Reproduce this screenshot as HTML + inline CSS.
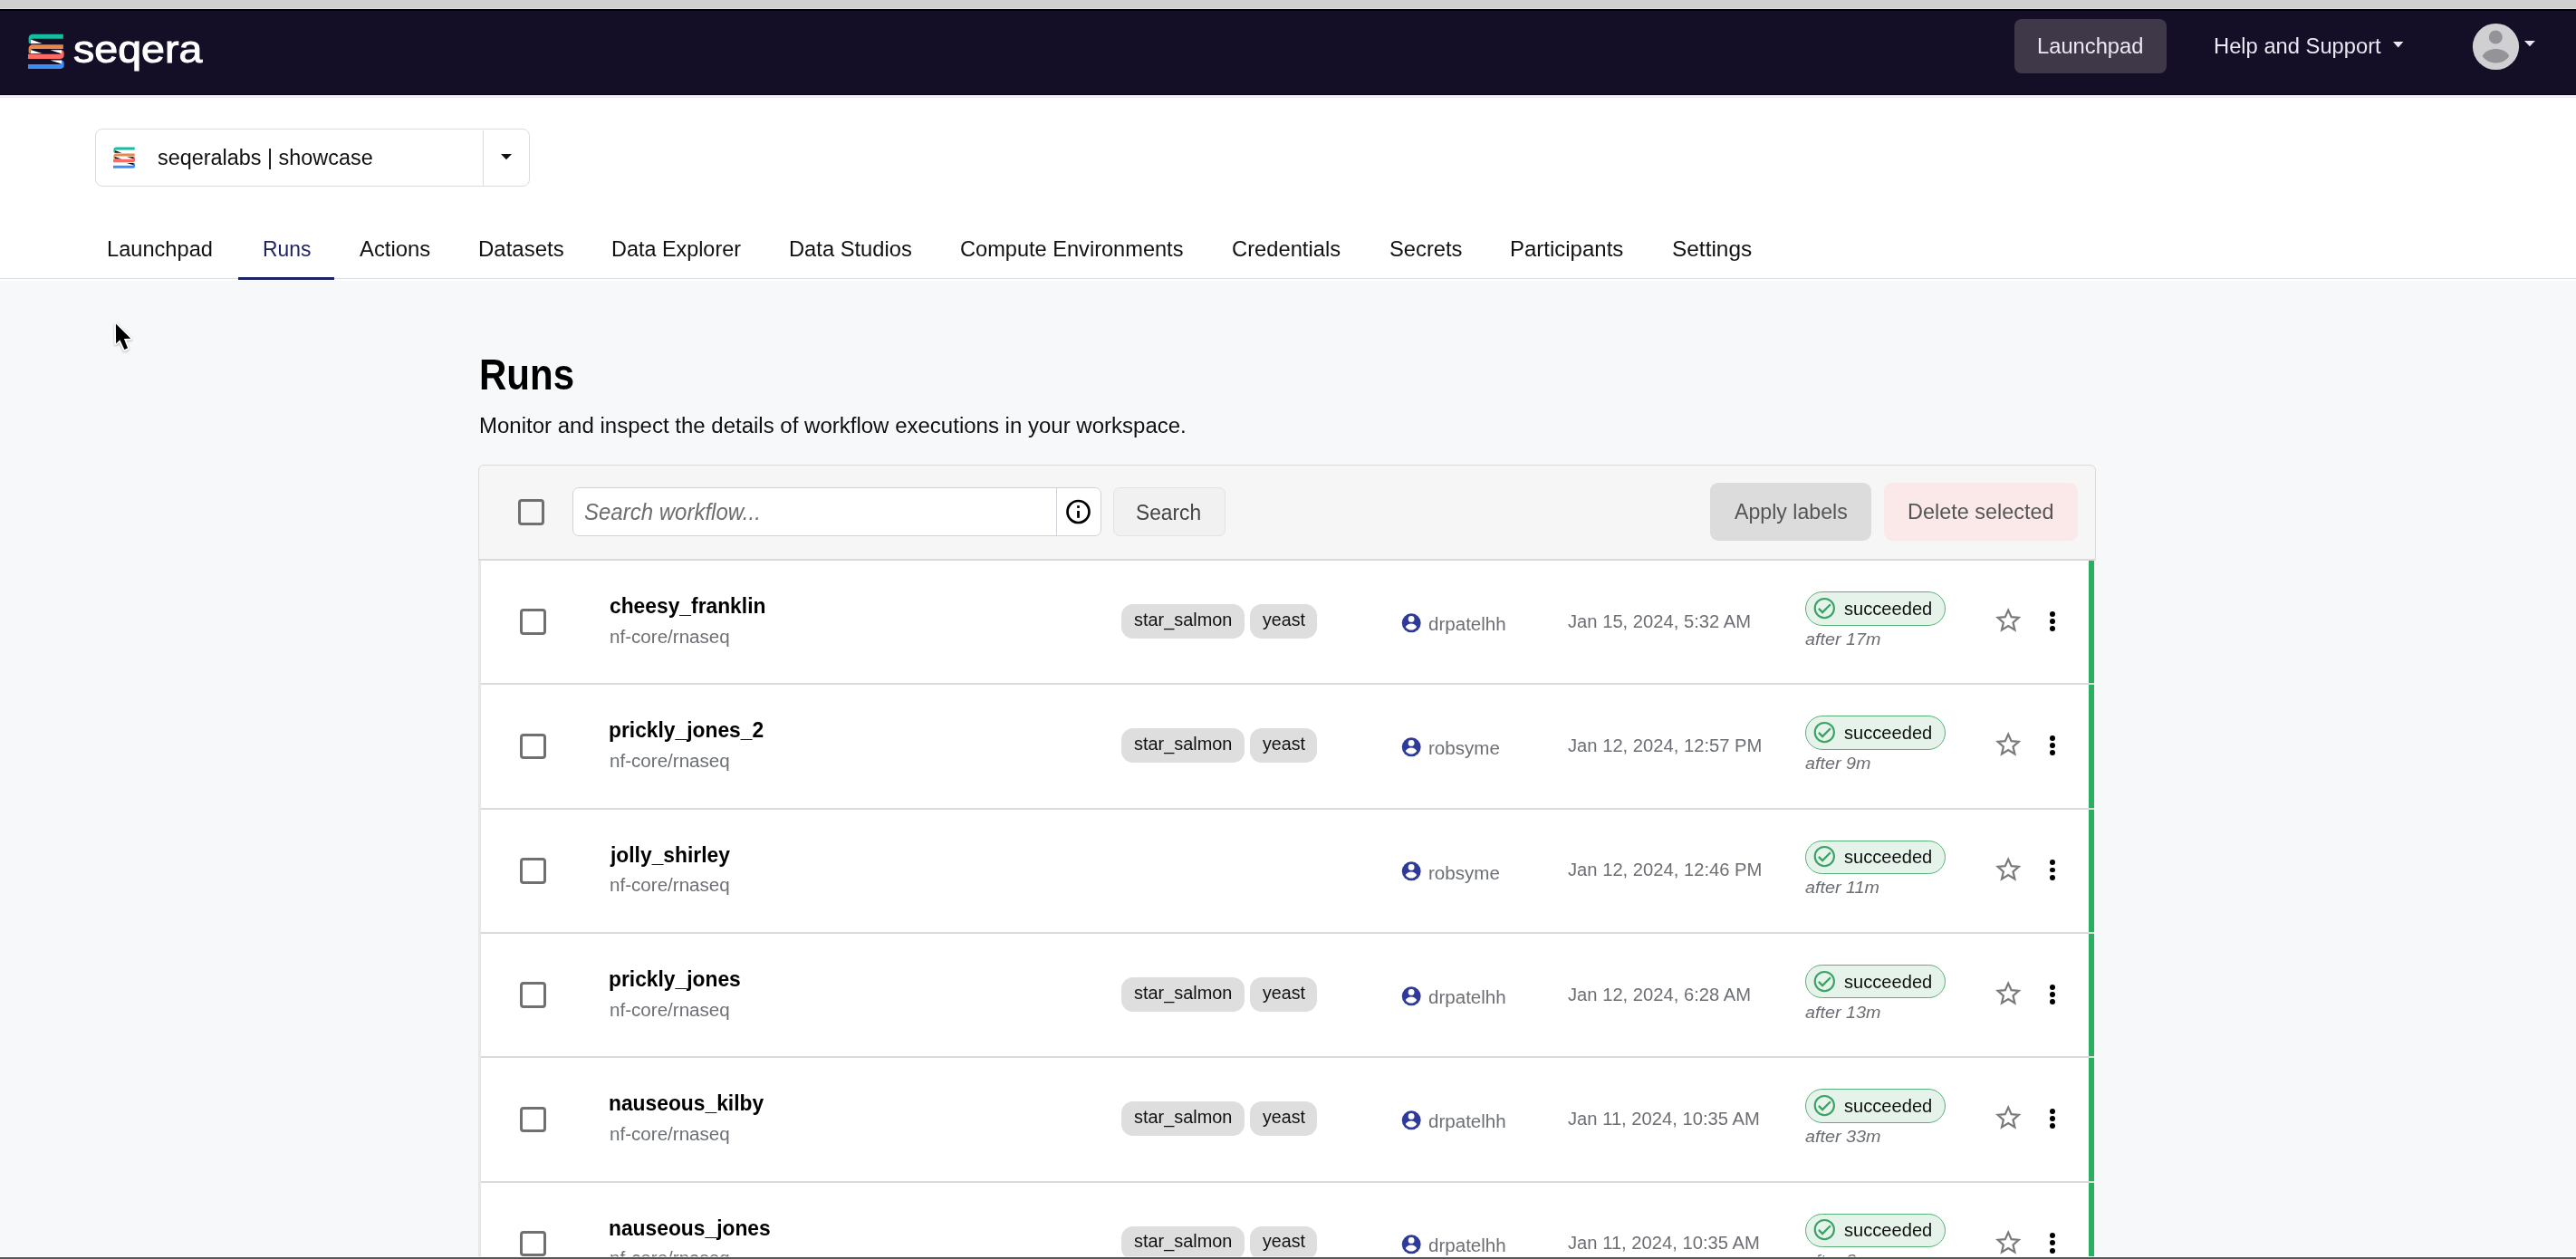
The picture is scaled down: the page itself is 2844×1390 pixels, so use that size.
<!DOCTYPE html>
<html><head><meta charset="utf-8"><title>Runs</title>
<style>
html{margin:0;padding:0;overflow:hidden;width:2844px;height:1390px;}
body{margin:0;padding:0;}
body{width:2844px;height:1390px;position:relative;overflow:hidden;background:#f7f8fa;font-family:"Liberation Sans",sans-serif;}
.a{position:absolute;}
.t{position:absolute;white-space:nowrap;line-height:1;transform-origin:0 0;font-family:"Liberation Sans",sans-serif;}
svg.a{overflow:visible;}
</style></head><body><div id="root" style="position:absolute;left:0;top:0;width:2844px;height:1390px;overflow:hidden;">
<div class="a" style="left:0px;top:0px;width:2844.00px;height:9.00px;background:#d0d0d0"></div>
<div class="a" style="left:0px;top:9px;width:2844.00px;height:1.00px;background:#dedede"></div>
<div class="a" style="left:0px;top:10px;width:2844.00px;height:2.00px;background:#000"></div>
<div class="a" style="left:0px;top:12px;width:2844.00px;height:92.00px;background:#140f26"></div>
<div class="a" style="left:0px;top:104px;width:2844.00px;height:1.00px;background:#07031a"></div>
<div class="a" style="left:0px;top:105px;width:2844.00px;height:1.50px;background:#efeef4"></div>
<div class="a" style="left:0px;top:106.5px;width:2844.00px;height:1.50px;background:#ebedec"></div>
<div class="a" style="left:0px;top:108px;width:2844.00px;height:199.00px;background:#ffffff"></div>
<div class="a" style="left:0px;top:307px;width:2844.00px;height:1.00px;background:#dedede"></div>
<div class="a" style="left:0px;top:308px;width:2844.00px;height:2.00px;background:#ffffff"></div>
<svg class="a" style="left:31px;top:37px" width="40.00" height="40.00" viewBox="0 0 40 40">
<path fill="#13bf9e" d="M38.8,0.8 L5.5,0.8 C2,0.8 0.6,3 0.6,6 L0.6,9 C0.6,10.5 1.5,11.2 2.6,11.2 L2.6,7.6 C2.6,6.6 3.5,5.8 5.5,5.8 L38.8,5.8 Z"/>
<path fill="#ffffff" d="M2.8,6.6 L15.5,10.9 L2.8,11.2 Z"/>
<path fill="#e8874b" d="M38.8,12.2 L5.5,12.2 C2,12.2 0.6,14.4 0.6,17.4 L0.6,20 C0.6,21.5 1.5,22.2 2.6,22.2 L2.6,19 C2.6,18 3.5,17.1 5.5,17.1 L38.8,17.1 Z"/>
<path fill="#ffffff" d="M2.8,17.9 L15.5,22 L2.8,22.3 Z"/>
<path fill="#f96b64" d="M0,22.7 L34.5,22.7 C36,22.7 36.9,21.9 36.9,20.6 L36.9,18.2 C38.6,18.2 39.6,19.6 39.6,21.6 L39.6,24 C39.6,26.5 38,28.1 35,28.1 L0,28.1 Z"/>
<path fill="#ffffff" d="M37,18.3 L24.5,18.3 L37,22.2 Z"/>
<path fill="#3c8ef4" d="M0,33.9 L34.5,33.9 C36,33.9 36.9,33.1 36.9,31.8 L36.9,29.4 C38.6,29.4 39.6,30.8 39.6,32.8 L39.6,35.2 C39.6,37.7 38,38.9 35,38.9 L0,38.9 Z"/>
<path fill="#ffffff" d="M37,29.5 L24.5,29.5 L37,33.4 Z"/>
</svg>
<div class="t" style="left:81.00px;top:34px;font-size:42px;font-weight:400;font-style:normal;color:#ffffff;transform:scaleX(1.1077);-webkit-text-stroke:1px #fff;">seqera</div>
<div class="a" style="left:2224px;top:21px;width:168.00px;height:59.50px;background:#3f3849;border-radius:8px"></div>
<div class="t" style="left:2249.13px;top:39px;font-size:24.6px;font-weight:400;font-style:normal;color:#ece8f3;transform:scaleX(0.9650);">Launchpad</div>
<div class="t" style="left:2443.64px;top:39px;font-size:24.6px;font-weight:400;font-style:normal;color:#ece8f3;transform:scaleX(0.9649);">Help and Support</div>
<svg class="a" style="left:2641.9px;top:46.3px" width="11.40" height="6.50" viewBox="0 0 12 7" preserveAspectRatio="none"><path fill="#ece8f3" d="M0,0 L12,0 L6,7 Z"/></svg>
<svg class="a" style="left:2729px;top:25px" width="53" height="53" viewBox="0 0 53 53">
<circle cx="26.5" cy="26.5" r="25.6" fill="#d0d0d2"/>
<circle cx="26.3" cy="16" r="7.5" fill="#949398"/>
<path fill="#949398" d="M11.6,36.8 C15,31 21,29.1 26.5,29.1 C32,29.1 38,31 41.3,36.8 C38,42.2 32,44.6 26.5,44.6 C21,44.6 15,42.2 11.6,36.8 Z"/>
</svg>
<svg class="a" style="left:2787.1px;top:44.8px" width="11.90" height="6.20" viewBox="0 0 12 7" preserveAspectRatio="none"><path fill="#ece8f3" d="M0,0 L12,0 L6,7 Z"/></svg>
<div class="a" style="left:105px;top:142px;width:479.50px;height:63.50px;box-sizing:border-box;border:1.5px solid #dcdcdc;border-radius:8px;background:#fff"></div>
<div class="a" style="left:532.8px;top:143.5px;width:1.40px;height:61.00px;background:#dcdcdc"></div>
<svg class="a" style="left:124.6px;top:161.8px" width="24.40" height="24.40" viewBox="0 0 40 40">
<path fill="#13bf9e" d="M38.8,0.8 L5.5,0.8 C2,0.8 0.6,3 0.6,6 L0.6,9 C0.6,10.5 1.5,11.2 2.6,11.2 L2.6,7.6 C2.6,6.6 3.5,5.8 5.5,5.8 L38.8,5.8 Z"/>
<path fill="#111111" d="M2.8,6.6 L15.5,10.9 L2.8,11.2 Z"/>
<path fill="#e8874b" d="M38.8,12.2 L5.5,12.2 C2,12.2 0.6,14.4 0.6,17.4 L0.6,20 C0.6,21.5 1.5,22.2 2.6,22.2 L2.6,19 C2.6,18 3.5,17.1 5.5,17.1 L38.8,17.1 Z"/>
<path fill="#111111" d="M2.8,17.9 L15.5,22 L2.8,22.3 Z"/>
<path fill="#f96b64" d="M0,22.7 L34.5,22.7 C36,22.7 36.9,21.9 36.9,20.6 L36.9,18.2 C38.6,18.2 39.6,19.6 39.6,21.6 L39.6,24 C39.6,26.5 38,28.1 35,28.1 L0,28.1 Z"/>
<path fill="#111111" d="M37,18.3 L24.5,18.3 L37,22.2 Z"/>
<path fill="#3c8ef4" d="M0,33.9 L34.5,33.9 C36,33.9 36.9,33.1 36.9,31.8 L36.9,29.4 C38.6,29.4 39.6,30.8 39.6,32.8 L39.6,35.2 C39.6,37.7 38,38.9 35,38.9 L0,38.9 Z"/>
<path fill="#111111" d="M37,29.5 L24.5,29.5 L37,33.4 Z"/>
</svg>
<div class="t" style="left:173.50px;top:163px;font-size:23.3px;font-weight:400;font-style:normal;color:#111111;transform:scaleX(1.0047);">seqeralabs | showcase</div>
<svg class="a" style="left:553.2px;top:169.8px" width="12.00" height="6.20" viewBox="0 0 12 7" preserveAspectRatio="none"><path fill="#111111" d="M0,0 L12,0 L6,7 Z"/></svg>
<div class="t" style="left:118.24px;top:263px;font-size:24.5px;font-weight:400;font-style:normal;color:#111111;transform:scaleX(0.9642);">Launchpad</div>
<div class="t" style="left:289.57px;top:263px;font-size:24.5px;font-weight:400;font-style:normal;color:#1e2461;transform:scaleX(0.9339);">Runs</div>
<div class="t" style="left:397.00px;top:263px;font-size:24.5px;font-weight:400;font-style:normal;color:#111111;transform:scaleX(0.9737);">Actions</div>
<div class="t" style="left:528.02px;top:263px;font-size:24.5px;font-weight:400;font-style:normal;color:#111111;transform:scaleX(0.9789);">Datasets</div>
<div class="t" style="left:674.85px;top:263px;font-size:24.5px;font-weight:400;font-style:normal;color:#111111;transform:scaleX(0.9544);">Data Explorer</div>
<div class="t" style="left:871.23px;top:263px;font-size:24.5px;font-weight:400;font-style:normal;color:#111111;transform:scaleX(0.9676);">Data Studios</div>
<div class="t" style="left:1060.44px;top:263px;font-size:24.5px;font-weight:400;font-style:normal;color:#111111;transform:scaleX(0.9627);">Compute Environments</div>
<div class="t" style="left:1360.03px;top:263px;font-size:24.5px;font-weight:400;font-style:normal;color:#111111;transform:scaleX(0.9691);">Credentials</div>
<div class="t" style="left:1533.53px;top:263px;font-size:24.5px;font-weight:400;font-style:normal;color:#111111;transform:scaleX(0.9683);">Secrets</div>
<div class="t" style="left:1667.12px;top:263px;font-size:24.5px;font-weight:400;font-style:normal;color:#111111;transform:scaleX(0.9787);">Participants</div>
<div class="t" style="left:1845.60px;top:263px;font-size:24.5px;font-weight:400;font-style:normal;color:#111111;transform:scaleX(0.9966);">Settings</div>
<div class="a" style="left:263.2px;top:305.8px;width:106.30px;height:3.20px;background:#1d2265"></div>
<svg class="a" style="left:120px;top:350px;filter:drop-shadow(0.8px 1.6px 1.2px rgba(0,0,0,0.28))" width="40" height="45" viewBox="0 0 40 45">
<path fill="#000" stroke="#fff" stroke-width="3.6" paint-order="stroke" stroke-linejoin="round" d="M7.9,7.6 L8.1,29.2 L12.4,25.2 L17.4,36 L21,34.3 L16.9,23.9 L24.3,23.7 Z"/>
</svg>
<div class="t" style="left:529.13px;top:390px;font-size:47.5px;font-weight:700;font-style:normal;color:#000000;transform:scaleX(0.8852);">Runs</div>
<div class="t" style="left:528.78px;top:459px;font-size:23.5px;font-weight:400;font-style:normal;color:#111111;transform:scaleX(1.0218);">Monitor and inspect the details of workflow executions in your workspace.</div>
<div class="a" style="left:528px;top:513px;width:1785.50px;height:882.00px;box-sizing:border-box;border:1px solid #dcdcdc;border-radius:6px;background:#f6f6f6"></div>
<div class="a" style="left:528px;top:617px;width:1785.50px;height:2.00px;background:#dadada"></div>
<div class="a" style="left:528px;top:619px;width:3.00px;height:771.00px;background:#e6e8e8"></div>
<div class="a" style="left:531px;top:619px;width:1775.20px;height:768.00px;background:#ffffff"></div>
<div class="a" style="left:2306.2px;top:619px;width:6.00px;height:768.00px;background:#2aae62"></div>
<div class="a" style="left:2312.2px;top:619px;width:7.80px;height:768.00px;background:#f7f8fa"></div>
<div class="a" style="left:572px;top:551px;width:29.00px;height:29.00px;box-sizing:border-box;border:3px solid #6f6f6f;border-radius:4px"></div>
<div class="a" style="left:632.2px;top:538px;width:583.40px;height:54.40px;box-sizing:border-box;border:1.5px solid #cfd3d8;border-radius:7px;background:#fff"></div>
<div class="a" style="left:1165.7px;top:539.2px;width:1.30px;height:52.00px;background:#cfd3d8"></div>
<svg class="a" style="left:1176px;top:551px" width="29" height="29" viewBox="0 0 29 29">
<circle cx="14.5" cy="14" r="12" fill="none" stroke="#000" stroke-width="2.7"/>
<rect x="13.1" y="7.2" width="2.8" height="2.7" fill="#000"/>
<rect x="13.1" y="13" width="2.8" height="7.8" fill="#000"/>
</svg>
<div class="t" style="left:644.84px;top:553px;font-size:24.9px;font-weight:400;font-style:italic;color:#6e6e6e;transform:scaleX(0.9646);">Search workflow...</div>
<div class="a" style="left:1228.5px;top:538px;width:124.10px;height:54.40px;box-sizing:border-box;border:1px solid #e3e3e3;border-radius:7px;background:#f1f1f1"></div>
<div class="t" style="left:1254.37px;top:554px;font-size:24.4px;font-weight:400;font-style:normal;color:#444444;transform:scaleX(0.9329);">Search</div>
<div class="a" style="left:1888px;top:533px;width:177.90px;height:63.70px;background:#dcdcdc;border-radius:9px"></div>
<div class="t" style="left:1914.70px;top:553px;font-size:24.3px;font-weight:400;font-style:normal;color:#555555;transform:scaleX(0.9519);">Apply labels</div>
<div class="a" style="left:2079.5px;top:533px;width:214.60px;height:63.70px;background:#fbe9ea;border-radius:9px"></div>
<div class="t" style="left:2105.54px;top:553px;font-size:24.3px;font-weight:400;font-style:normal;color:#555555;transform:scaleX(0.9639);">Delete selected</div>
<div class="a" style="left:574.4px;top:672.4px;width:28.50px;height:28.50px;box-sizing:border-box;border:3px solid #707070;border-radius:4px"></div>
<div class="t" style="left:672.80px;top:657px;font-size:24px;font-weight:700;font-style:normal;color:#000000;transform:scaleX(0.9503);">cheesy_franklin</div>
<div class="t" style="left:672.80px;top:694px;font-size:19.6px;font-weight:400;font-style:normal;color:#6c7075;transform:scaleX(1.0508);">nf-core/rnaseq</div>
<div class="a" style="left:1238.2px;top:667.0px;width:135.80px;height:37.70px;background:#dedede;border-radius:13px"></div>
<div class="a" style="left:1380px;top:667.0px;width:73.80px;height:37.70px;background:#dedede;border-radius:13px"></div>
<div class="t" style="left:1251.60px;top:675px;font-size:19.7px;font-weight:400;font-style:normal;color:#111111;transform:scaleX(1.0103);">star_salmon</div>
<div class="t" style="left:1393.50px;top:675px;font-size:19.7px;font-weight:400;font-style:normal;color:#111111;transform:scaleX(0.9979);">yeast</div>
<svg class="a" style="left:1547px;top:676.60px" width="22" height="22" viewBox="0 0 22 22">
<circle cx="11.2" cy="10.8" r="10.45" fill="#2e3a9a"/>
<circle cx="11.1" cy="6.4" r="3.4" fill="#fff"/>
<path fill="#fff" d="M4.7,15 C6.5,12.4 8.8,11.4 11,11.4 C13.2,11.4 15.5,12.4 17.2,15 C15.5,17.6 13.2,18.6 11,18.6 C8.8,18.6 6.5,17.6 4.7,15 Z"/>
</svg>
<div class="t" style="left:1577.00px;top:680px;font-size:19.6px;font-weight:400;font-style:normal;color:#6c6f74;transform:scaleX(1.0494);">drpatelhh</div>
<div class="t" style="left:1730.50px;top:676px;font-size:20px;font-weight:400;font-style:normal;color:#6c6f74;transform:scaleX(1.0095);">Jan 15, 2024, 5:32 AM</div>
<div class="a" style="left:1992.9px;top:653.0px;width:154.80px;height:37.60px;box-sizing:border-box;border:1.2px solid #58b277;border-radius:19px;background:#e5f3ea"></div>
<svg class="a" style="left:2002px;top:658.60px" width="25" height="25" viewBox="0 0 25 25">
<circle cx="12.3" cy="12.6" r="10.6" fill="none" stroke="#3aa264" stroke-width="2.1"/>
<path d="M5.9,12.9 L10.1,17.1 L18.9,8.3" fill="none" stroke="#3aa264" stroke-width="2.3"/>
</svg>
<div class="t" style="left:2036.20px;top:663px;font-size:19.3px;font-weight:400;font-style:normal;color:#111111;transform:scaleX(1.0430);">succeeded</div>
<div class="t" style="left:1992.90px;top:696px;font-size:19.2px;font-weight:400;font-style:italic;color:#6b6e73;transform:scaleX(1.0309);">after 17m</div>
<svg class="a" style="left:2201.5px;top:670.00px" width="31" height="30" viewBox="0 0 31 30">
<path fill="none" stroke="#7a7a7a" stroke-width="2.2" stroke-linejoin="miter" d="M15.2,3.6 L18.6,11.2 L26.7,11.9 L20.5,17.3 L22.4,25.4 L15.2,21.1 L8,25.4 L9.9,17.3 L3.7,11.9 L11.8,11.2 Z"/>
</svg>
<div class="a" style="left:2263.1px;top:674.85px;width:5.9px;height:5.9px;border-radius:50%;background:#000"></div>
<div class="a" style="left:2263.1px;top:682.95px;width:5.9px;height:5.9px;border-radius:50%;background:#000"></div>
<div class="a" style="left:2263.1px;top:691.15px;width:5.9px;height:5.9px;border-radius:50%;background:#000"></div>
<div class="a" style="left:531px;top:754.3px;width:1781.20px;height:2.00px;background:#dadada"></div>
<div class="a" style="left:574.4px;top:809.7px;width:28.50px;height:28.50px;box-sizing:border-box;border:3px solid #707070;border-radius:4px"></div>
<div class="t" style="left:671.85px;top:794px;font-size:24px;font-weight:700;font-style:normal;color:#000000;transform:scaleX(0.9503);">prickly_jones_2</div>
<div class="t" style="left:672.80px;top:831px;font-size:19.6px;font-weight:400;font-style:normal;color:#6c7075;transform:scaleX(1.0508);">nf-core/rnaseq</div>
<div class="a" style="left:1238.2px;top:804.3px;width:135.80px;height:37.70px;background:#dedede;border-radius:13px"></div>
<div class="a" style="left:1380px;top:804.3px;width:73.80px;height:37.70px;background:#dedede;border-radius:13px"></div>
<div class="t" style="left:1251.60px;top:812px;font-size:19.7px;font-weight:400;font-style:normal;color:#111111;transform:scaleX(1.0103);">star_salmon</div>
<div class="t" style="left:1393.50px;top:812px;font-size:19.7px;font-weight:400;font-style:normal;color:#111111;transform:scaleX(0.9979);">yeast</div>
<svg class="a" style="left:1547px;top:813.90px" width="22" height="22" viewBox="0 0 22 22">
<circle cx="11.2" cy="10.8" r="10.45" fill="#2e3a9a"/>
<circle cx="11.1" cy="6.4" r="3.4" fill="#fff"/>
<path fill="#fff" d="M4.7,15 C6.5,12.4 8.8,11.4 11,11.4 C13.2,11.4 15.5,12.4 17.2,15 C15.5,17.6 13.2,18.6 11,18.6 C8.8,18.6 6.5,17.6 4.7,15 Z"/>
</svg>
<div class="t" style="left:1577.00px;top:817px;font-size:19.6px;font-weight:400;font-style:normal;color:#6c6f74;transform:scaleX(1.0494);">robsyme</div>
<div class="t" style="left:1730.50px;top:813px;font-size:20px;font-weight:400;font-style:normal;color:#6c6f74;transform:scaleX(1.0095);">Jan 12, 2024, 12:57 PM</div>
<div class="a" style="left:1992.9px;top:790.3px;width:154.80px;height:37.60px;box-sizing:border-box;border:1.2px solid #58b277;border-radius:19px;background:#e5f3ea"></div>
<svg class="a" style="left:2002px;top:795.90px" width="25" height="25" viewBox="0 0 25 25">
<circle cx="12.3" cy="12.6" r="10.6" fill="none" stroke="#3aa264" stroke-width="2.1"/>
<path d="M5.9,12.9 L10.1,17.1 L18.9,8.3" fill="none" stroke="#3aa264" stroke-width="2.3"/>
</svg>
<div class="t" style="left:2036.20px;top:800px;font-size:19.3px;font-weight:400;font-style:normal;color:#111111;transform:scaleX(1.0430);">succeeded</div>
<div class="t" style="left:1992.90px;top:833px;font-size:19.2px;font-weight:400;font-style:italic;color:#6b6e73;transform:scaleX(1.0309);">after 9m</div>
<svg class="a" style="left:2201.5px;top:807.30px" width="31" height="30" viewBox="0 0 31 30">
<path fill="none" stroke="#7a7a7a" stroke-width="2.2" stroke-linejoin="miter" d="M15.2,3.6 L18.6,11.2 L26.7,11.9 L20.5,17.3 L22.4,25.4 L15.2,21.1 L8,25.4 L9.9,17.3 L3.7,11.9 L11.8,11.2 Z"/>
</svg>
<div class="a" style="left:2263.1px;top:812.15px;width:5.9px;height:5.9px;border-radius:50%;background:#000"></div>
<div class="a" style="left:2263.1px;top:820.25px;width:5.9px;height:5.9px;border-radius:50%;background:#000"></div>
<div class="a" style="left:2263.1px;top:828.45px;width:5.9px;height:5.9px;border-radius:50%;background:#000"></div>
<div class="a" style="left:531px;top:891.6px;width:1781.20px;height:2.00px;background:#dadada"></div>
<div class="a" style="left:574.4px;top:947.0px;width:28.50px;height:28.50px;box-sizing:border-box;border:3px solid #707070;border-radius:4px"></div>
<div class="t" style="left:673.75px;top:932px;font-size:24px;font-weight:700;font-style:normal;color:#000000;transform:scaleX(0.9503);">jolly_shirley</div>
<div class="t" style="left:672.80px;top:968px;font-size:19.6px;font-weight:400;font-style:normal;color:#6c7075;transform:scaleX(1.0508);">nf-core/rnaseq</div>
<svg class="a" style="left:1547px;top:951.20px" width="22" height="22" viewBox="0 0 22 22">
<circle cx="11.2" cy="10.8" r="10.45" fill="#2e3a9a"/>
<circle cx="11.1" cy="6.4" r="3.4" fill="#fff"/>
<path fill="#fff" d="M4.7,15 C6.5,12.4 8.8,11.4 11,11.4 C13.2,11.4 15.5,12.4 17.2,15 C15.5,17.6 13.2,18.6 11,18.6 C8.8,18.6 6.5,17.6 4.7,15 Z"/>
</svg>
<div class="t" style="left:1577.00px;top:955px;font-size:19.6px;font-weight:400;font-style:normal;color:#6c6f74;transform:scaleX(1.0494);">robsyme</div>
<div class="t" style="left:1730.50px;top:950px;font-size:20px;font-weight:400;font-style:normal;color:#6c6f74;transform:scaleX(1.0095);">Jan 12, 2024, 12:46 PM</div>
<div class="a" style="left:1992.9px;top:927.6px;width:154.80px;height:37.60px;box-sizing:border-box;border:1.2px solid #58b277;border-radius:19px;background:#e5f3ea"></div>
<svg class="a" style="left:2002px;top:933.20px" width="25" height="25" viewBox="0 0 25 25">
<circle cx="12.3" cy="12.6" r="10.6" fill="none" stroke="#3aa264" stroke-width="2.1"/>
<path d="M5.9,12.9 L10.1,17.1 L18.9,8.3" fill="none" stroke="#3aa264" stroke-width="2.3"/>
</svg>
<div class="t" style="left:2036.20px;top:937px;font-size:19.3px;font-weight:400;font-style:normal;color:#111111;transform:scaleX(1.0430);">succeeded</div>
<div class="t" style="left:1992.90px;top:970px;font-size:19.2px;font-weight:400;font-style:italic;color:#6b6e73;transform:scaleX(1.0309);">after 11m</div>
<svg class="a" style="left:2201.5px;top:944.60px" width="31" height="30" viewBox="0 0 31 30">
<path fill="none" stroke="#7a7a7a" stroke-width="2.2" stroke-linejoin="miter" d="M15.2,3.6 L18.6,11.2 L26.7,11.9 L20.5,17.3 L22.4,25.4 L15.2,21.1 L8,25.4 L9.9,17.3 L3.7,11.9 L11.8,11.2 Z"/>
</svg>
<div class="a" style="left:2263.1px;top:949.45px;width:5.9px;height:5.9px;border-radius:50%;background:#000"></div>
<div class="a" style="left:2263.1px;top:957.55px;width:5.9px;height:5.9px;border-radius:50%;background:#000"></div>
<div class="a" style="left:2263.1px;top:965.75px;width:5.9px;height:5.9px;border-radius:50%;background:#000"></div>
<div class="a" style="left:531px;top:1028.9px;width:1781.20px;height:2.00px;background:#dadada"></div>
<div class="a" style="left:574.4px;top:1084.3px;width:28.50px;height:28.50px;box-sizing:border-box;border:3px solid #707070;border-radius:4px"></div>
<div class="t" style="left:671.85px;top:1069px;font-size:24px;font-weight:700;font-style:normal;color:#000000;transform:scaleX(0.9503);">prickly_jones</div>
<div class="t" style="left:672.80px;top:1106px;font-size:19.6px;font-weight:400;font-style:normal;color:#6c7075;transform:scaleX(1.0508);">nf-core/rnaseq</div>
<div class="a" style="left:1238.2px;top:1078.9px;width:135.80px;height:37.70px;background:#dedede;border-radius:13px"></div>
<div class="a" style="left:1380px;top:1078.9px;width:73.80px;height:37.70px;background:#dedede;border-radius:13px"></div>
<div class="t" style="left:1251.60px;top:1087px;font-size:19.7px;font-weight:400;font-style:normal;color:#111111;transform:scaleX(1.0103);">star_salmon</div>
<div class="t" style="left:1393.50px;top:1087px;font-size:19.7px;font-weight:400;font-style:normal;color:#111111;transform:scaleX(0.9979);">yeast</div>
<svg class="a" style="left:1547px;top:1088.50px" width="22" height="22" viewBox="0 0 22 22">
<circle cx="11.2" cy="10.8" r="10.45" fill="#2e3a9a"/>
<circle cx="11.1" cy="6.4" r="3.4" fill="#fff"/>
<path fill="#fff" d="M4.7,15 C6.5,12.4 8.8,11.4 11,11.4 C13.2,11.4 15.5,12.4 17.2,15 C15.5,17.6 13.2,18.6 11,18.6 C8.8,18.6 6.5,17.6 4.7,15 Z"/>
</svg>
<div class="t" style="left:1577.00px;top:1092px;font-size:19.6px;font-weight:400;font-style:normal;color:#6c6f74;transform:scaleX(1.0494);">drpatelhh</div>
<div class="t" style="left:1730.50px;top:1088px;font-size:20px;font-weight:400;font-style:normal;color:#6c6f74;transform:scaleX(1.0095);">Jan 12, 2024, 6:28 AM</div>
<div class="a" style="left:1992.9px;top:1064.9px;width:154.80px;height:37.60px;box-sizing:border-box;border:1.2px solid #58b277;border-radius:19px;background:#e5f3ea"></div>
<svg class="a" style="left:2002px;top:1070.50px" width="25" height="25" viewBox="0 0 25 25">
<circle cx="12.3" cy="12.6" r="10.6" fill="none" stroke="#3aa264" stroke-width="2.1"/>
<path d="M5.9,12.9 L10.1,17.1 L18.9,8.3" fill="none" stroke="#3aa264" stroke-width="2.3"/>
</svg>
<div class="t" style="left:2036.20px;top:1075px;font-size:19.3px;font-weight:400;font-style:normal;color:#111111;transform:scaleX(1.0430);">succeeded</div>
<div class="t" style="left:1992.90px;top:1108px;font-size:19.2px;font-weight:400;font-style:italic;color:#6b6e73;transform:scaleX(1.0309);">after 13m</div>
<svg class="a" style="left:2201.5px;top:1081.90px" width="31" height="30" viewBox="0 0 31 30">
<path fill="none" stroke="#7a7a7a" stroke-width="2.2" stroke-linejoin="miter" d="M15.2,3.6 L18.6,11.2 L26.7,11.9 L20.5,17.3 L22.4,25.4 L15.2,21.1 L8,25.4 L9.9,17.3 L3.7,11.9 L11.8,11.2 Z"/>
</svg>
<div class="a" style="left:2263.1px;top:1086.75px;width:5.9px;height:5.9px;border-radius:50%;background:#000"></div>
<div class="a" style="left:2263.1px;top:1094.85px;width:5.9px;height:5.9px;border-radius:50%;background:#000"></div>
<div class="a" style="left:2263.1px;top:1103.05px;width:5.9px;height:5.9px;border-radius:50%;background:#000"></div>
<div class="a" style="left:531px;top:1166.2px;width:1781.20px;height:2.00px;background:#dadada"></div>
<div class="a" style="left:574.4px;top:1221.6px;width:28.50px;height:28.50px;box-sizing:border-box;border:3px solid #707070;border-radius:4px"></div>
<div class="t" style="left:671.85px;top:1206px;font-size:24px;font-weight:700;font-style:normal;color:#000000;transform:scaleX(0.9503);">nauseous_kilby</div>
<div class="t" style="left:672.80px;top:1243px;font-size:19.6px;font-weight:400;font-style:normal;color:#6c7075;transform:scaleX(1.0508);">nf-core/rnaseq</div>
<div class="a" style="left:1238.2px;top:1216.2px;width:135.80px;height:37.70px;background:#dedede;border-radius:13px"></div>
<div class="a" style="left:1380px;top:1216.2px;width:73.80px;height:37.70px;background:#dedede;border-radius:13px"></div>
<div class="t" style="left:1251.60px;top:1224px;font-size:19.7px;font-weight:400;font-style:normal;color:#111111;transform:scaleX(1.0103);">star_salmon</div>
<div class="t" style="left:1393.50px;top:1224px;font-size:19.7px;font-weight:400;font-style:normal;color:#111111;transform:scaleX(0.9979);">yeast</div>
<svg class="a" style="left:1547px;top:1225.80px" width="22" height="22" viewBox="0 0 22 22">
<circle cx="11.2" cy="10.8" r="10.45" fill="#2e3a9a"/>
<circle cx="11.1" cy="6.4" r="3.4" fill="#fff"/>
<path fill="#fff" d="M4.7,15 C6.5,12.4 8.8,11.4 11,11.4 C13.2,11.4 15.5,12.4 17.2,15 C15.5,17.6 13.2,18.6 11,18.6 C8.8,18.6 6.5,17.6 4.7,15 Z"/>
</svg>
<div class="t" style="left:1577.00px;top:1229px;font-size:19.6px;font-weight:400;font-style:normal;color:#6c6f74;transform:scaleX(1.0494);">drpatelhh</div>
<div class="t" style="left:1730.50px;top:1225px;font-size:20px;font-weight:400;font-style:normal;color:#6c6f74;transform:scaleX(1.0095);">Jan 11, 2024, 10:35 AM</div>
<div class="a" style="left:1992.9px;top:1202.2px;width:154.80px;height:37.60px;box-sizing:border-box;border:1.2px solid #58b277;border-radius:19px;background:#e5f3ea"></div>
<svg class="a" style="left:2002px;top:1207.80px" width="25" height="25" viewBox="0 0 25 25">
<circle cx="12.3" cy="12.6" r="10.6" fill="none" stroke="#3aa264" stroke-width="2.1"/>
<path d="M5.9,12.9 L10.1,17.1 L18.9,8.3" fill="none" stroke="#3aa264" stroke-width="2.3"/>
</svg>
<div class="t" style="left:2036.20px;top:1212px;font-size:19.3px;font-weight:400;font-style:normal;color:#111111;transform:scaleX(1.0430);">succeeded</div>
<div class="t" style="left:1992.90px;top:1245px;font-size:19.2px;font-weight:400;font-style:italic;color:#6b6e73;transform:scaleX(1.0309);">after 33m</div>
<svg class="a" style="left:2201.5px;top:1219.20px" width="31" height="30" viewBox="0 0 31 30">
<path fill="none" stroke="#7a7a7a" stroke-width="2.2" stroke-linejoin="miter" d="M15.2,3.6 L18.6,11.2 L26.7,11.9 L20.5,17.3 L22.4,25.4 L15.2,21.1 L8,25.4 L9.9,17.3 L3.7,11.9 L11.8,11.2 Z"/>
</svg>
<div class="a" style="left:2263.1px;top:1224.05px;width:5.9px;height:5.9px;border-radius:50%;background:#000"></div>
<div class="a" style="left:2263.1px;top:1232.15px;width:5.9px;height:5.9px;border-radius:50%;background:#000"></div>
<div class="a" style="left:2263.1px;top:1240.35px;width:5.9px;height:5.9px;border-radius:50%;background:#000"></div>
<div class="a" style="left:531px;top:1303.5px;width:1781.20px;height:2.00px;background:#dadada"></div>
<div class="a" style="left:574.4px;top:1358.9px;width:28.50px;height:28.50px;box-sizing:border-box;border:3px solid #707070;border-radius:4px"></div>
<div class="t" style="left:671.85px;top:1344px;font-size:24px;font-weight:700;font-style:normal;color:#000000;transform:scaleX(0.9503);">nauseous_jones</div>
<div class="t" style="left:672.80px;top:1380px;font-size:19.6px;font-weight:400;font-style:normal;color:#6c7075;transform:scaleX(1.0508);">nf-core/rnaseq</div>
<div class="a" style="left:1238.2px;top:1353.5px;width:135.80px;height:37.70px;background:#dedede;border-radius:13px"></div>
<div class="a" style="left:1380px;top:1353.5px;width:73.80px;height:37.70px;background:#dedede;border-radius:13px"></div>
<div class="t" style="left:1251.60px;top:1361px;font-size:19.7px;font-weight:400;font-style:normal;color:#111111;transform:scaleX(1.0103);">star_salmon</div>
<div class="t" style="left:1393.50px;top:1361px;font-size:19.7px;font-weight:400;font-style:normal;color:#111111;transform:scaleX(0.9979);">yeast</div>
<svg class="a" style="left:1547px;top:1363.10px" width="22" height="22" viewBox="0 0 22 22">
<circle cx="11.2" cy="10.8" r="10.45" fill="#2e3a9a"/>
<circle cx="11.1" cy="6.4" r="3.4" fill="#fff"/>
<path fill="#fff" d="M4.7,15 C6.5,12.4 8.8,11.4 11,11.4 C13.2,11.4 15.5,12.4 17.2,15 C15.5,17.6 13.2,18.6 11,18.6 C8.8,18.6 6.5,17.6 4.7,15 Z"/>
</svg>
<div class="t" style="left:1577.00px;top:1366px;font-size:19.6px;font-weight:400;font-style:normal;color:#6c6f74;transform:scaleX(1.0494);">drpatelhh</div>
<div class="t" style="left:1730.50px;top:1362px;font-size:20px;font-weight:400;font-style:normal;color:#6c6f74;transform:scaleX(1.0095);">Jan 11, 2024, 10:35 AM</div>
<div class="a" style="left:1992.9px;top:1339.5px;width:154.80px;height:37.60px;box-sizing:border-box;border:1.2px solid #58b277;border-radius:19px;background:#e5f3ea"></div>
<svg class="a" style="left:2002px;top:1345.10px" width="25" height="25" viewBox="0 0 25 25">
<circle cx="12.3" cy="12.6" r="10.6" fill="none" stroke="#3aa264" stroke-width="2.1"/>
<path d="M5.9,12.9 L10.1,17.1 L18.9,8.3" fill="none" stroke="#3aa264" stroke-width="2.3"/>
</svg>
<div class="t" style="left:2036.20px;top:1349px;font-size:19.3px;font-weight:400;font-style:normal;color:#111111;transform:scaleX(1.0430);">succeeded</div>
<div class="t" style="left:1992.90px;top:1382px;font-size:19.2px;font-weight:400;font-style:italic;color:#6b6e73;transform:scaleX(1.0309);">after 3m</div>
<svg class="a" style="left:2201.5px;top:1356.50px" width="31" height="30" viewBox="0 0 31 30">
<path fill="none" stroke="#7a7a7a" stroke-width="2.2" stroke-linejoin="miter" d="M15.2,3.6 L18.6,11.2 L26.7,11.9 L20.5,17.3 L22.4,25.4 L15.2,21.1 L8,25.4 L9.9,17.3 L3.7,11.9 L11.8,11.2 Z"/>
</svg>
<div class="a" style="left:2263.1px;top:1361.35px;width:5.9px;height:5.9px;border-radius:50%;background:#000"></div>
<div class="a" style="left:2263.1px;top:1369.45px;width:5.9px;height:5.9px;border-radius:50%;background:#000"></div>
<div class="a" style="left:2263.1px;top:1377.65px;width:5.9px;height:5.9px;border-radius:50%;background:#000"></div>
<div class="a" style="left:0px;top:1387px;width:2844.00px;height:1.00px;background:rgba(255,255,255,0.6)"></div>
<div class="a" style="left:0px;top:1388px;width:2844.00px;height:2.00px;background:#575757"></div>
</div></body></html>
